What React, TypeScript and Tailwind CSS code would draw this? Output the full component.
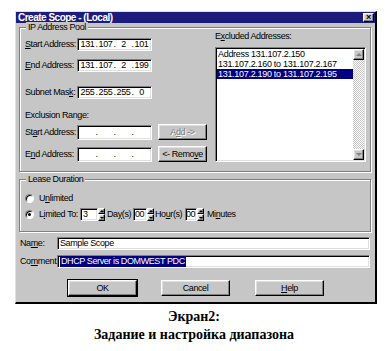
import React from 'react';

const sunken =
  'bg-white border border-t-[#808080] border-l-[#808080] border-b-white border-r-white shadow-[inset_1px_1px_0_#000,inset_-1px_-1px_0_#dfdfdf]';
const raised =
  'bg-[#c6c6c6] border border-t-white border-l-white border-b-black border-r-black shadow-[inset_-1px_-1px_0_#808080,inset_1px_1px_0_#dfdfdf]';
const etched =
  'relative border border-[#808080] shadow-[1px_1px_0_#fff,inset_1px_1px_0_#fff]';

const IpField = ({ parts, h = 'h-[13px]' }: { parts?: string[]; h?: string }) => {
  const p = parts || ['', '', '', ''];
  return (
    <div className={`${sunken} ${h} w-[75px] flex items-center pl-[2px]`}>
      {p.map((v, i) => (
        <React.Fragment key={i}>
          <span className="w-[15px] text-center">{v}</span>
          {i < 3 && <span className="w-[3px] text-center">.</span>}
        </React.Fragment>
      ))}
    </div>
  );
};

const Spin = () => (
  <div className="flex flex-col w-[7px] h-[13px]">
    <div className={`${raised} h-[6px] flex items-center justify-center`}>
      <div className="w-0 h-0 border-x-[2px] border-x-transparent border-b-[2px] border-b-black" />
    </div>
    <div className={`${raised} h-[7px] flex items-center justify-center`}>
      <div className="w-0 h-0 border-x-[2px] border-x-transparent border-t-[2px] border-t-black" />
    </div>
  </div>
);

const Radio = ({ on }: { on?: boolean }) => (
  <div className="w-[9px] h-[9px] rounded-full bg-white border border-t-[#808080] border-l-[#808080] border-b-white border-r-white shadow-[inset_1px_1px_0_#000] flex items-center justify-center">
    {on && <div className="w-[3px] h-[3px] rounded-full bg-black" />}
  </div>
);

const ScrollArrow = ({ up }: { up?: boolean }) => (
  <div className={`${raised} h-[11px] w-[11px] flex items-center justify-center`}>
    {up ? (
      <div className="w-0 h-0 border-x-[3px] border-x-transparent border-b-[3px] border-b-[#808080]" />
    ) : (
      <div className="w-0 h-0 border-x-[3px] border-x-transparent border-t-[3px] border-t-[#808080]" />
    )}
  </div>
);

export default function App() {
  return (
    <div className="w-[388px] h-[351px] bg-white overflow-hidden font-['Liberation_Sans',Arial,sans-serif] text-[9px] tracking-[-0.4px] leading-[11px] text-black">
      {/* dialog */}
      <div className="ml-[15px] mt-[11px] w-[362px] h-[293px] bg-[#c6c6c6] border-l border-t border-l-[#dfdfdf] border-t-[#dfdfdf] border-r-2 border-b-2 border-r-black border-b-black flex flex-col">
        <div className="h-[11px] bg-[#1c1c7c] flex items-center justify-between">
          <span className="pl-[2px] text-white font-bold text-[10px] tracking-[-0.5px] leading-[11px]">Create Scope - (Local)</span>
          <div className={`${raised} w-[11px] h-[9px] mr-[1px] flex items-center justify-center text-[9px] font-bold leading-none`}>×</div>
        </div>

        {/* IP Address Pool */}
        <div className={`${etched} mt-[4px] ml-[3px] w-[352px] h-[145px] flex`}>
          <span className="absolute -top-[6px] left-[6px] px-[2px] bg-[#c6c6c6]">IP Address Pool</span>
          <div className="ml-[5px] w-[190px] flex flex-col">
            <div className="mt-[10px] flex items-center h-[13px]">
              <span className="w-[52px]"><u>S</u>tart Address:</span>
              <IpField parts={['131', '107', '2', '101']} />
            </div>
            <div className="mt-[8px] flex items-center h-[13px]">
              <span className="w-[52px]"><u>E</u>nd Address:</span>
              <IpField parts={['131', '107', '2', '199']} />
            </div>
            <div className="mt-[14px] flex items-center h-[13px]">
              <span className="w-[52px]">Subnet Mas<u>k</u>:</span>
              <IpField parts={['255', '255', '255', '0']} />
            </div>
            <div className="mt-[11px] h-[11px]">Exclusion Range:</div>
            <div className="mt-[3px] flex items-center h-[16px]">
              <span className="w-[52px]">St<u>a</u>rt Address:</span>
              <IpField h="h-[15px]" />
              <div className={`${raised} ml-[6px] w-[49px] h-[16px] flex items-center justify-center text-[#808080] [text-shadow:1px_1px_0_#fff]`}>
                A<u>d</u>d -&gt;
              </div>
            </div>
            <div className="mt-[6px] flex items-center h-[16px]">
              <span className="w-[52px]">E<u>n</u>d Address:</span>
              <IpField h="h-[15px]" />
              <div className={`${raised} ml-[6px] w-[49px] h-[16px] flex items-center justify-center`}>
                &lt;- Remo<u>v</u>e
              </div>
            </div>
          </div>
          <div className="w-[151px] flex flex-col">
            <div className="mt-[3px] h-[11px]">E<u>x</u>cluded Addresses:</div>
            <div className={`${sunken} mt-[5px] h-[115px] flex p-[1px]`}>
              <div className="flex-1 flex flex-col leading-[10px] tracking-[-0.3px]">
                <div className="pl-[1px]">Address 131.107.2.150</div>
                <div className="pl-[1px]">131.107.2.160 to 131.107.2.167</div>
                <div className="pl-[1px] bg-[#000080] text-white">131.107.2.190 to 131.107.2.195</div>
              </div>
              <div className="w-[11px] flex flex-col justify-between bg-[repeating-conic-gradient(#fff_0_25%,#c6c6c6_0_50%)] bg-[length:2px_2px]">
                <ScrollArrow up />
                <ScrollArrow />
              </div>
            </div>
          </div>
        </div>

        {/* Lease Duration */}
        <div className={`${etched} mt-[7px] ml-[3px] w-[352px] h-[53px] flex flex-col`}>
          <span className="absolute -top-[6px] left-[6px] px-[2px] bg-[#c6c6c6]">Lease Duration</span>
          <div className="mt-[13px] ml-[5px] flex items-center h-[11px]">
            <Radio />
            <span className="ml-[5px]">U<u>n</u>limited</span>
          </div>
          <div className="mt-[4px] ml-[5px] flex items-center h-[13px]">
            <Radio on />
            <span className="ml-[5px] w-[41px]">L<u>i</u>mited To:</span>
            <div className={`${sunken} w-[18px] h-[13px] pl-[2px] flex items-center`}>3</div>
            <Spin />
            <span className="ml-[2px] w-[26px]">Da<u>y</u>(s)</span>
            <div className={`${sunken} w-[14px] h-[13px] pl-[1px] flex items-center`}>00</div>
            <Spin />
            <span className="ml-[1px] w-[30px]">Ho<u>u</u>r(s)</span>
            <div className={`${sunken} w-[12px] h-[13px] flex items-center`}>00</div>
            <Spin />
            <span className="ml-[3px]">Mi<u>n</u>utes</span>
          </div>
        </div>

        {/* Name / Comment */}
        <div className="mt-[5px] ml-[4px] flex items-center h-[13px]">
          <span className="w-[37px]">Na<u>m</u>e:</span>
          <div className={`${sunken} w-[313px] h-[13px] pl-[2px] flex items-center`}>Sample Scope</div>
        </div>
        <div className="mt-[5px] ml-[4px] flex items-center h-[13px]">
          <span className="w-[37px]">Co<u>m</u>ment:</span>
          <div className={`${sunken} w-[313px] h-[13px] pl-[2px] flex items-center`}>
            <span className="bg-[#000080] text-white px-[1px]">DHCP Server is DOMWEST PDC</span>
          </div>
        </div>

        {/* buttons */}
        <div className="mt-[12px] flex h-[16px]">
          <div className={`${raised} ml-[52px] w-[69px] h-[16px] outline outline-1 outline-black flex items-center justify-center`}>OK</div>
          <div className={`${raised} ml-[24px] w-[69px] h-[16px] flex items-center justify-center`}>Cancel</div>
          <div className={`${raised} ml-[25px] w-[69px] h-[16px] flex items-center justify-center`}><u>H</u>elp</div>
        </div>
      </div>

      {/* caption */}
      <div className="mt-[4px] text-center font-['Liberation_Serif','Times_New_Roman',serif] font-bold text-[14px] leading-[18px] tracking-normal">
        <div>Экран2:</div>
        <div>Задание и настройка диапазона</div>
      </div>
    </div>
  );
}
